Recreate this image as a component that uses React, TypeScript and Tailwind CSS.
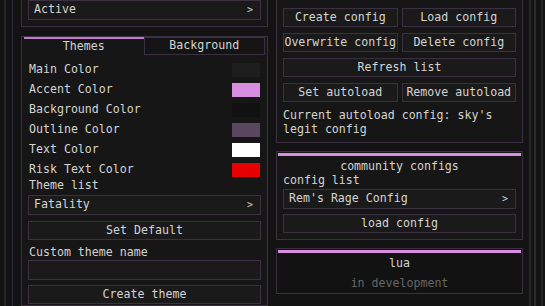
import React from "react";

const btn =
  "h-[19px] flex items-center justify-center bg-[#1a1a1a] border border-[#3a3042] text-[#d4d4d4]";

function Dropdown({ label }: { label: string }) {
  return (
    <div className="h-[20px] flex items-center justify-between px-[5px] bg-[#1a1a1a] border border-[#3a3042] text-[#d4d4d4]">
      <span>{label}</span>
      <span className="text-[10px] pr-[2px]">&gt;</span>
    </div>
  );
}

function ColorRow({ label, color }: { label: string; color: string }) {
  return (
    <div className="h-[20px] flex items-center justify-between">
      <span>{label}</span>
      <span className={`w-[28px] h-[14px] ${color}`} />
    </div>
  );
}

export default function App() {
  return (
    <div
      className="w-[545px] h-[306px] overflow-hidden flex bg-[#131313] text-[11.6px] leading-none text-[#d4d4d4]"
      style={{ fontFamily: '"DejaVu Sans Mono", "Liberation Mono", monospace' }}
    >
      {/* left frame lines */}
      <div className="w-[21px] shrink-0 flex">
        <div className="w-[4px]" />
        <div className="w-[2px] bg-[#262626]" />
        <div className="w-[6px]" />
        <div className="w-[1px] bg-[#2e2a33]" />
      </div>

      {/* left column */}
      <div className="w-[247px] shrink-0 flex flex-col gap-[9px]">
        <div className="-mt-[8px] pt-[7px] px-[6px] pb-[6px] border border-[#3a3042] bg-[#161616]">
          <Dropdown label="Active" />
        </div>

        <div className="flex-1 border border-[#3a3042] bg-[#161616] px-[6px]">
          <div className="flex h-[18px] -mx-[4px]">
            <div className="flex-1 flex items-center justify-center border-t-2 border-[#c27ac9]">
              Themes
            </div>
            <div className="flex-1 flex items-center justify-center border border-[#3a3042] bg-[#141414]">
              Background
            </div>
          </div>
          <div className="mt-[5px] px-[1px]">
            <ColorRow label="Main Color" color="bg-[#1e1e1e]" />
            <ColorRow label="Accent Color" color="bg-[#d88ee0]" />
            <ColorRow label="Background Color" color="bg-[#111111]" />
            <ColorRow label="Outline Color" color="bg-[#58475f]" />
            <ColorRow label="Text Color" color="bg-[#ffffff]" />
            <ColorRow label="Risk Text Color" color="bg-[#e60000]" />
          </div>
          <div className="h-[12px] flex items-center px-[1px]">Theme list</div>
          <div className="mt-[3px] flex flex-col gap-[6px]">
            <Dropdown label="Fatality" />
            <div className={btn}>Set Default</div>
          </div>
          <div className="mt-[7px] h-[12px] flex items-center px-[1px]">Custom theme name</div>
          <div className="mt-[1px] h-[20px] bg-[#1a1a1a] border border-[#3a3042]" />
          <div className={`mt-[5px] ${btn}`}>Create theme</div>
        </div>
      </div>

      <div className="w-[8px] shrink-0" />

      {/* right column */}
      <div className="w-[247px] shrink-0 flex flex-col">
        <div className="-mt-[40px] pt-[47px] px-[6px] pb-[6px] border border-[#3a3042] bg-[#161616] flex flex-col gap-[6px]">
          <div className="grid grid-cols-2 gap-[4px]">
            <div className={btn}>Create config</div>
            <div className={btn}>Load config</div>
          </div>
          <div className="grid grid-cols-2 gap-[4px]">
            <div className={btn}>Overwrite config</div>
            <div className={btn}>Delete config</div>
          </div>
          <div className={btn}>Refresh list</div>
          <div className="grid grid-cols-2 gap-[4px]">
            <div className={btn}>Set autoload</div>
            <div className={btn}>Remove autoload</div>
          </div>
          <div className="leading-[14px]">
            Current autoload config: sky's
            <br />
            legit config
          </div>
        </div>

        <div className="mt-[8px] border border-[#3a3042] bg-[#161616] px-[6px] pb-[6px]">
          <div className="-mx-[5px] h-[3px] mt-[1px] bg-[#d88ee0]" />
          <div className="h-[16px] mt-[3px] flex items-center justify-center">community configs</div>
          <div className="h-[12px] flex items-center">config list</div>
          <div className="mt-[2px] flex flex-col gap-[5px]">
            <Dropdown label="Rem's Rage Config" />
            <div className={btn}>load config</div>
          </div>
        </div>

        <div className="mt-[8px] h-[46px] border border-[#3a3042] bg-[#121212]">
          <div className="mx-[1px] h-[3px] mt-[1px] bg-[#d88ee0]" />
          <div className="h-[14px] mt-[4px] flex items-center justify-center">lua</div>
          <div className="h-[14px] mt-[6px] flex items-center justify-center text-[#666666]">
            in development
          </div>
        </div>
      </div>

      {/* right frame lines */}
      <div className="flex-1 flex">
        <div className="w-[6px]" />
        <div className="w-[2px] bg-[#262626]" />
        <div className="w-[3px]" />
        <div className="w-[2px] bg-[#2a2a2a]" />
        <div className="w-[5px]" />
        <div className="w-[2px] bg-[#262626]" />
      </div>
    </div>
  );
}
